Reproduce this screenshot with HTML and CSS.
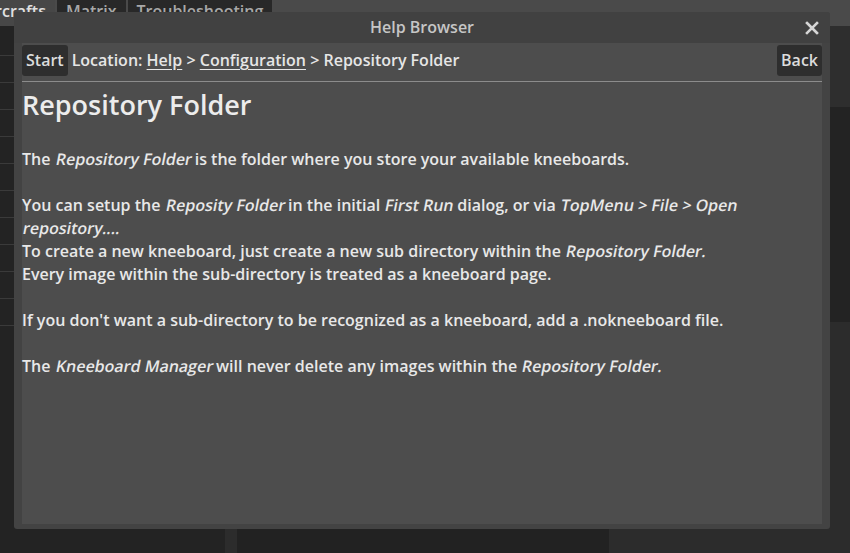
FILE: index.html
```html
<!DOCTYPE html>
<html>
<head>
<meta charset="utf-8">
<link rel="stylesheet" href="styles.css">
</head>
<body>
<div class="app">
  <div class="topbar">
    <div class="tabs">
      <div class="tab tab-active">Aircrafts</div>
      <div class="tab">Matrix</div>
      <div class="tab">Troubleshooting</div>
    </div>
  </div>
  <div class="left-panel">
    <div class="row"></div><div class="row"></div><div class="row"></div><div class="row"></div>
    <div class="row"></div><div class="row"></div><div class="row"></div><div class="row"></div>
    <div class="row"></div><div class="row"></div><div class="row"></div>
  </div>
  <div class="splitter"></div>
  <div class="center-panel"></div>
  <div class="right-panel">
    <div class="right-head"></div>
    <div class="right-mid"></div>
    <div class="right-low"></div>
  </div>
</div>

<div class="dialog">
  <div class="dialog-title">
    <span class="title-text">Help Browser</span>
    <svg class="close" width="14" height="14" viewBox="0 0 14 14">
      <path d="M2 2 L12 12 M12 2 L2 12" stroke="#d6d6d6" stroke-width="2.6" stroke-linecap="square" fill="none"/>
    </svg>
  </div>
  <div class="dialog-body">
    <div class="toolbar">
      <div class="btn">Start</div>
      <div class="location">Location: <span class="link">Help</span> &gt; <span class="link">Configuration</span> &gt; Repository Folder</div>
      <div class="btn">Back</div>
    </div>
    <div class="separator"></div>
    <h1 class="heading">Repository Folder</h1>
    <div class="text">
      <p>The <span class="it">Repository Folder</span> is the folder where you store your available kneeboards.</p>
      <p class="blank"></p>
      <p>You can setup the <span class="it">Reposity Folder</span> in the initial <span class="it">First Run</span> dialog, or via <span class="it">TopMenu &gt; File &gt; Open</span> <span class="it">repository....</span></p>
      <p>To create a new kneeboard, just create a new sub directory within the <span class="it">Repository Folder.</span></p>
      <p>Every image within the sub-directory is treated as a kneeboard page.</p>
      <p class="blank"></p>
      <p>If you don't want a sub-directory to be recognized as a kneeboard, add a .nokneeboard file.</p>
      <p class="blank"></p>
      <p>The <span class="it">Kneeboard Manager</span> will never delete any images within the <span class="it">Repository Folder.</span></p>
    </div>
  </div>
</div>
</body>
</html>
```

FILE: styles.css
```css
* { box-sizing: border-box; }
html, body {
  margin: 0;
  padding: 0;
  width: 850px;
  height: 553px;
  overflow: hidden;
  background: #222222;
  font-family: "Open Sans", "Noto Sans", sans-serif;
  font-weight: 600;
}

.app {
  width: 850px;
  height: 553px;
  display: grid;
  grid-template-columns: 225px 12px 372px 1fr;
  grid-template-rows: 26px 1fr;
}

.topbar {
  grid-column: 1 / -1;
  background: #4a4a4a;
  overflow: hidden;
}
.tabs {
  display: flex;
  gap: 2px;
  margin-left: -29px;
  height: 26px;
}
.tab {
  padding: 0 9px;
  height: 26px;
  line-height: 22px;
  font-size: 16px;
  color: #a8a8a8;
  background: #282828;
}
.tab-active {
  background: #474747;
  color: #e0e0e0;
}

.left-panel {
  background: #232323;
  padding-top: 3px;
}
.row {
  height: 27px;
  border-bottom: 1px solid #3a3a3a;
}
.splitter { background: #2c2c2c; }
.center-panel { background: #222222; }
.right-panel {
  display: flex;
  flex-direction: column;
  background: #2c2c2c;
}
.right-head { height: 81px; background: #2e2e2e; }
.right-mid { height: 215px; background: #232323; }
.right-low { flex: 1; background: #2c2c2c; }

.dialog {
  position: absolute;
  left: 14px;
  top: 12px;
  width: 816px;
  height: 517px;
  background: #434343;
  border-radius: 3px;
  display: flex;
  flex-direction: column;
  padding: 0 8px 5px 8px;
}
.dialog-title {
  height: 31px;
  display: flex;
  align-items: center;
  justify-content: center;
  position: relative;
  background: #414141;
  margin: 0 -8px;
  border-radius: 3px 3px 0 0;
}
.title-text {
  font-size: 16px;
  color: #c6c6c6;
  line-height: 31px;
}
.close {
  position: absolute;
  right: 11px;
  top: 9px;
}

.dialog-body {
  flex: 1;
  background: #4d4d4d;
  display: flex;
  flex-direction: column;
  color: #e8e8e8;
}
.toolbar {
  display: flex;
  align-items: center;
  height: 33px;
  padding-top: 1px;
}
.btn {
  background: #2e2e2e;
  border-radius: 3px;
  height: 31px;
  padding: 0 4px;
  font-size: 16px;
  line-height: 31px;
  color: #dcdcdc;
}
.location {
  flex: 1;
  font-size: 16px;
  padding-left: 4px;
  color: #e6e6e6;
}
.link { text-decoration: underline; text-underline-offset: 3px; }
.separator {
  margin-top: 5px;
  height: 1px;
  background: #8c8c8c;
}
.heading {
  margin: 6px 0 0 0;
  font-size: 27px;
  line-height: 34px;
  font-weight: 600;
  color: #ececec;
}
.text {
  margin-top: 26px;
  font-size: 16px;
  line-height: 23px;
}
.text p { margin: 0; }
.text p.blank { height: 23px; }
.it {
  display: inline-block;
  font-style: normal;
  transform: skewX(-11deg);
  transform-origin: 50% 75%;
}
```
